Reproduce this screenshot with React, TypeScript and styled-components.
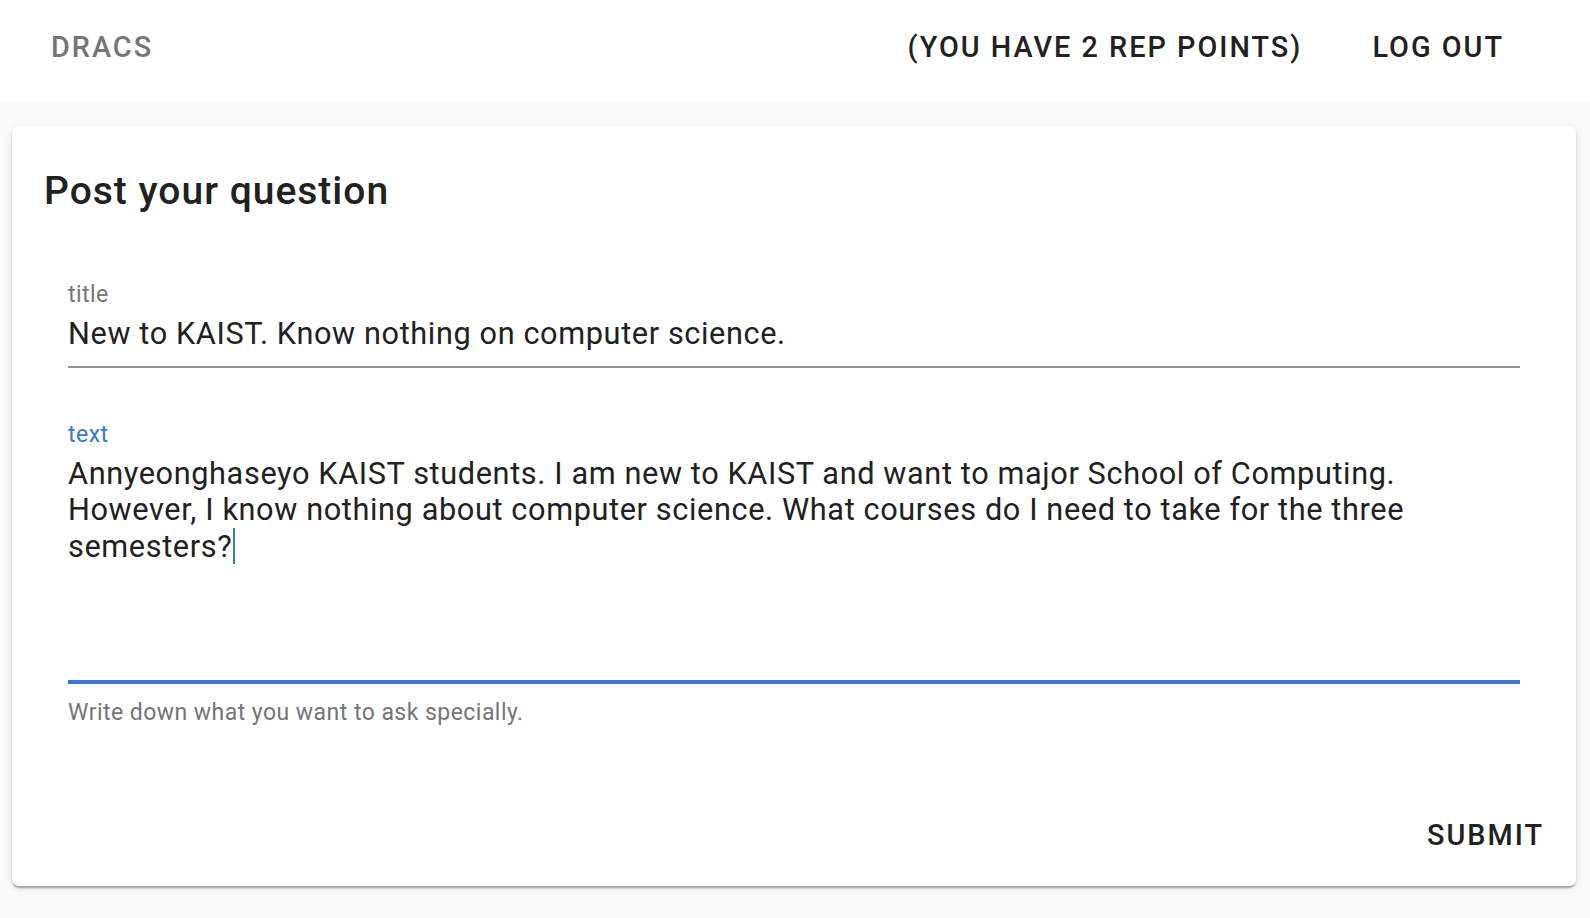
import React from "react";
import styled, { createGlobalStyle } from "styled-components";

const GlobalStyle = createGlobalStyle`
  html, body {
    margin: 0;
    padding: 0;
    background: #fafafa;
  }
  body {
    font-family: Roboto, "Helvetica Neue", Arial, sans-serif;
    -webkit-font-smoothing: antialiased;
  }
  *, *::before, *::after {
    box-sizing: border-box;
  }
`;

const BLUE = "#3a77d3";

const Page = styled.div`
  min-height: 918px;
  background: #fafafa;
`;

const Header = styled.header`
  height: 101px;
  background: #ffffff;
  display: flex;
  align-items: flex-start;
  justify-content: space-between;
  padding: 22px 86px 0 51px;
`;

const NavGroup = styled.nav`
  display: flex;
  align-items: flex-start;
  gap: 70px;
`;

const NavButton = styled.button<{ $muted?: boolean }>`
  font-family: Roboto, "Helvetica Neue", Arial, sans-serif;
  font-size: 28.8px;
  font-weight: 500;
  line-height: 1.75;
  letter-spacing: 0.07em;
  text-transform: uppercase;
  color: ${(p) => (p.$muted ? "#757575" : "#212121")};
  background: none;
  border: 0;
  padding: 0;
  margin: 0;
  cursor: pointer;
`;

const Main = styled.main`
  padding: 25px 14px 0 12px;
`;

const Card = styled.section`
  background: #ffffff;
  border-radius: 7px;
  box-shadow: 0 4px 2px -2px rgba(0, 0, 0, 0.2), 0 2px 2px 0 rgba(0, 0, 0, 0.14),
    0 2px 6px 0 rgba(0, 0, 0, 0.12);
  padding: 35px 0 26px;
`;

const Heading = styled.h2`
  margin: 0;
  padding: 0 30px 0 32px;
  font-family: Roboto, "Helvetica Neue", Arial, sans-serif;
  font-size: 39px;
  font-weight: 500;
  line-height: 61.4px;
  letter-spacing: 1px;
  color: #212121;
`;

const Form = styled.form`
  display: flex;
  flex-direction: column;
  padding: 0 56px;
  margin-top: 61px;
`;

const Field = styled.div<{ $spaced?: boolean }>`
  display: flex;
  flex-direction: column;
  margin-top: ${(p) => (p.$spaced ? "55.5px" : "0")};
`;

const Label = styled.label<{ $focused?: boolean }>`
  font-size: 23px;
  line-height: 23px;
  font-weight: 400;
  letter-spacing: 0.02em;
  color: ${(p) => (p.$focused ? BLUE : "#757575")};
`;

const InputValue = styled.div<{ $focused?: boolean; $multiline?: boolean }>`
  margin-top: 10px;
  font-size: 30.7px;
  line-height: 36px;
  font-weight: 400;
  letter-spacing: 0.02em;
  color: #212121;
  padding-bottom: 13.5px;
  border-bottom: ${(p) => (p.$focused ? `4px solid ${BLUE}` : "2px solid #949494")};
  height: ${(p) => (p.$multiline ? "227.7px" : "auto")};
  outline: none;
`;

const Caret = styled.span`
  display: inline-block;
  width: 2px;
  height: 36px;
  margin-left: 1px;
  vertical-align: -7px;
  background: ${BLUE};
`;

const Helper = styled.p`
  margin: 10px 0 0;
  font-size: 23px;
  line-height: 1.66;
  letter-spacing: 0.02em;
  color: #757575;
`;

const Actions = styled.div`
  display: flex;
  justify-content: flex-end;
  margin-top: 77.5px;
  padding-right: 32px;
`;

export default function App() {
  return (
    <Page>
      <GlobalStyle />
      <Header>
        <NavButton $muted>Dracs</NavButton>
        <NavGroup>
          <NavButton>(You have 2 rep points)</NavButton>
          <NavButton>Log out</NavButton>
        </NavGroup>
      </Header>
      <Main>
        <Card>
          <Heading>Post your question</Heading>
          <Form onSubmit={(e) => e.preventDefault()}>
            <Field>
              <Label>title</Label>
              <InputValue role="textbox">New to KAIST. Know nothing on computer science.</InputValue>
            </Field>
            <Field $spaced>
              <Label $focused>text</Label>
              <InputValue role="textbox" aria-multiline="true" $focused $multiline>
                Annyeonghaseyo KAIST students. I am new to KAIST and want to major School of Computing. However, I know nothing about computer science. What courses do I need to take for the three semesters?
                <Caret />
              </InputValue>
              <Helper>Write down what you want to ask specially.</Helper>
            </Field>
          </Form>
          <Actions>
            <NavButton type="button">Submit</NavButton>
          </Actions>
        </Card>
      </Main>
    </Page>
  );
}
